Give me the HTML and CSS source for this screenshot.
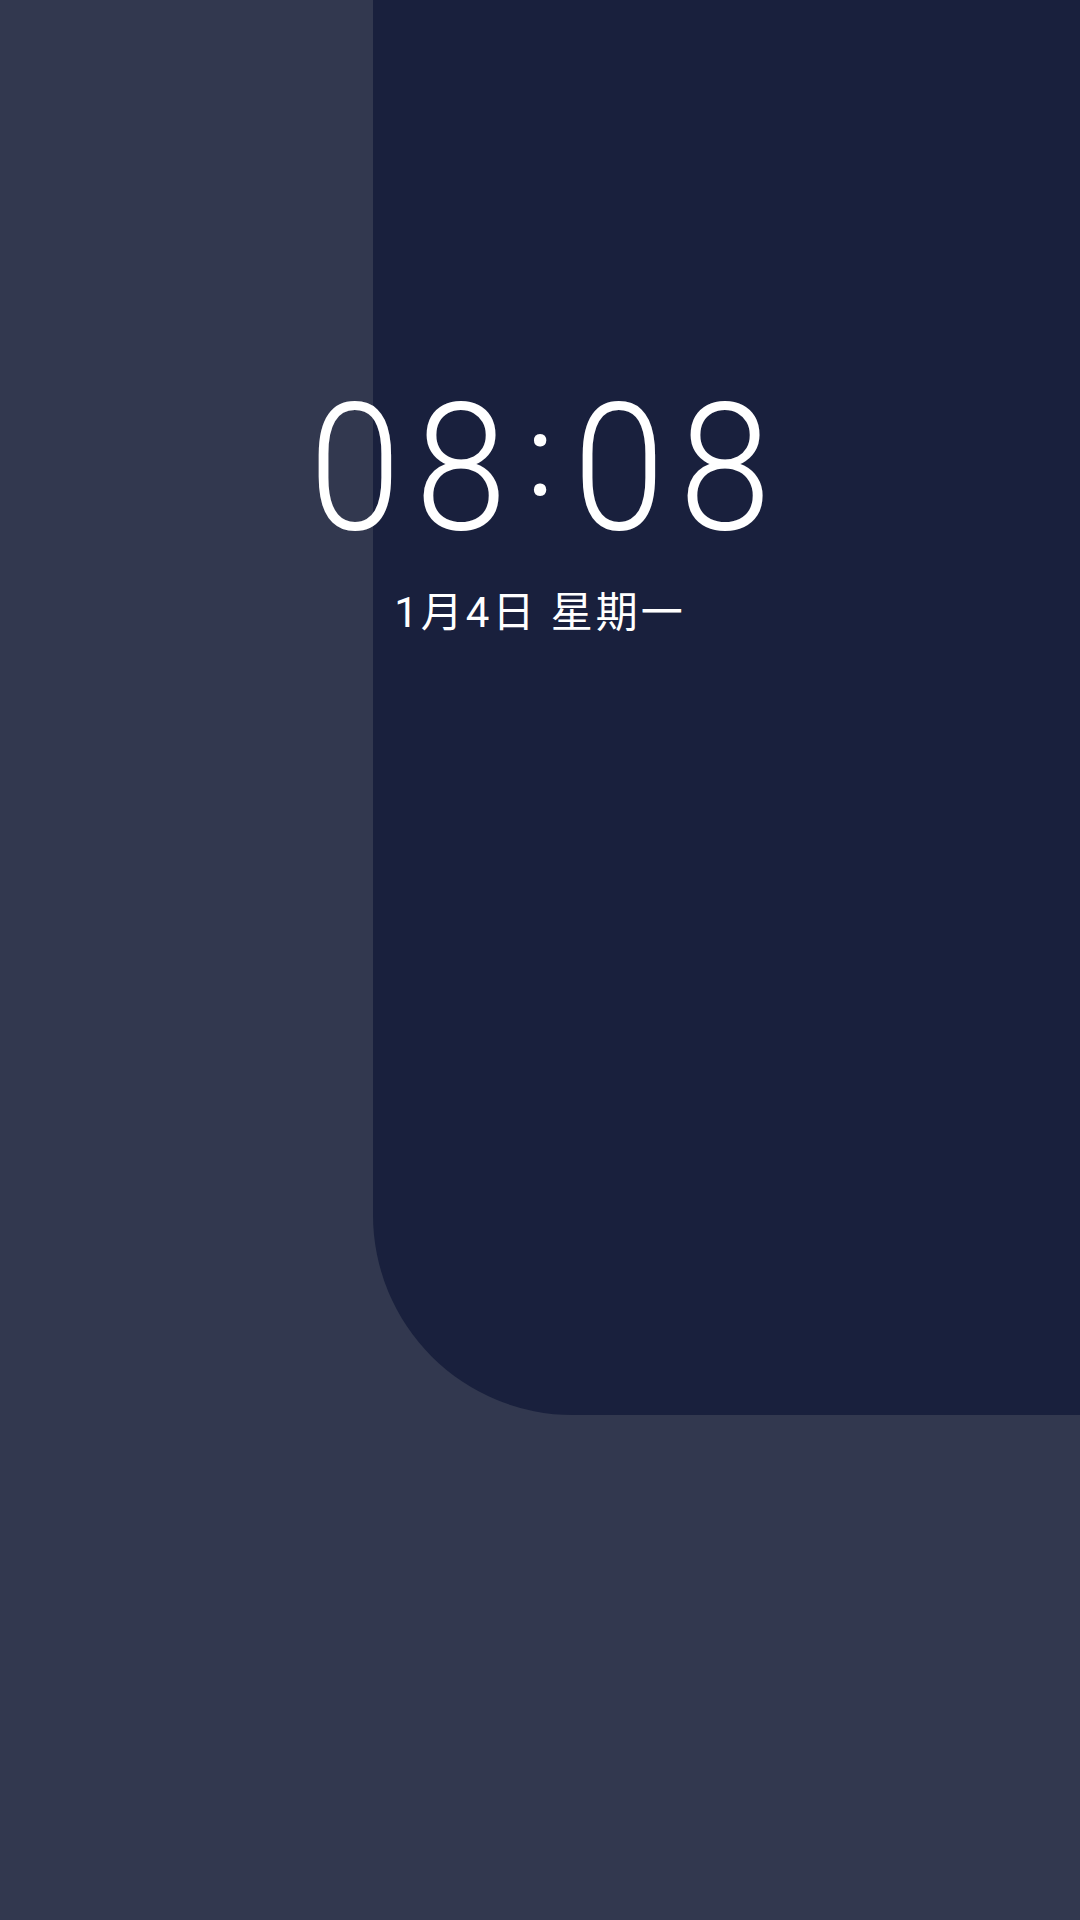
FILE: index.html
```html
<!DOCTYPE html>
<html lang="zh">
<head>
<meta charset="utf-8">
<link rel="stylesheet" href="styles.css">
</head>
<body>
<div class="screen">
  <div class="panel"></div>
  <div class="clock">
    <div class="time"><span class="digit">0</span><span class="digit">8</span><span class="colon">:</span><span class="digit">0</span><span class="digit">8</span></div>
    <div class="date">1月4日 星期一</div>
  </div>
</div>
</body>
</html>
```
FILE: styles.css
```css
html, body {
  margin: 0;
  padding: 0;
  background: #32384f;
}
.screen {
  width: 1080px;
  height: 1920px;
  display: grid;
  grid-template-columns: 1fr;
  grid-template-rows: 1fr;
  overflow: hidden;
}
.panel {
  grid-area: 1 / 1;
  margin-left: 373px;
  height: 1415px;
  background: #19203d;
  border-bottom-left-radius: 200px;
}
.clock {
  grid-area: 1 / 1;
  display: flex;
  flex-direction: column;
  align-items: center;
  padding-top: 378px;
  color: #ffffff;
}
.time {
  font-family: Roboto, "Noto Sans", sans-serif;
  font-weight: 300;
  font-size: 178px;
  line-height: 180px;
  height: 180px;
  white-space: nowrap;
}
.digit {
  display: inline-block;
  width: 106px;
  text-align: center;
  transform: scaleX(0.93);
}
.colon {
  display: inline-block;
  width: 52px;
  text-align: center;
  font-size: 110px;
  font-weight: 400;
  line-height: 110px;
  vertical-align: 36px;
  transform: scaleY(1.05);
}
.date {
  margin-top: 30px;
  font-family: Roboto, "Noto Sans CJK SC", sans-serif;
  font-size: 42px;
  line-height: 50px;
  letter-spacing: 3px;
  white-space: nowrap;
}
```
